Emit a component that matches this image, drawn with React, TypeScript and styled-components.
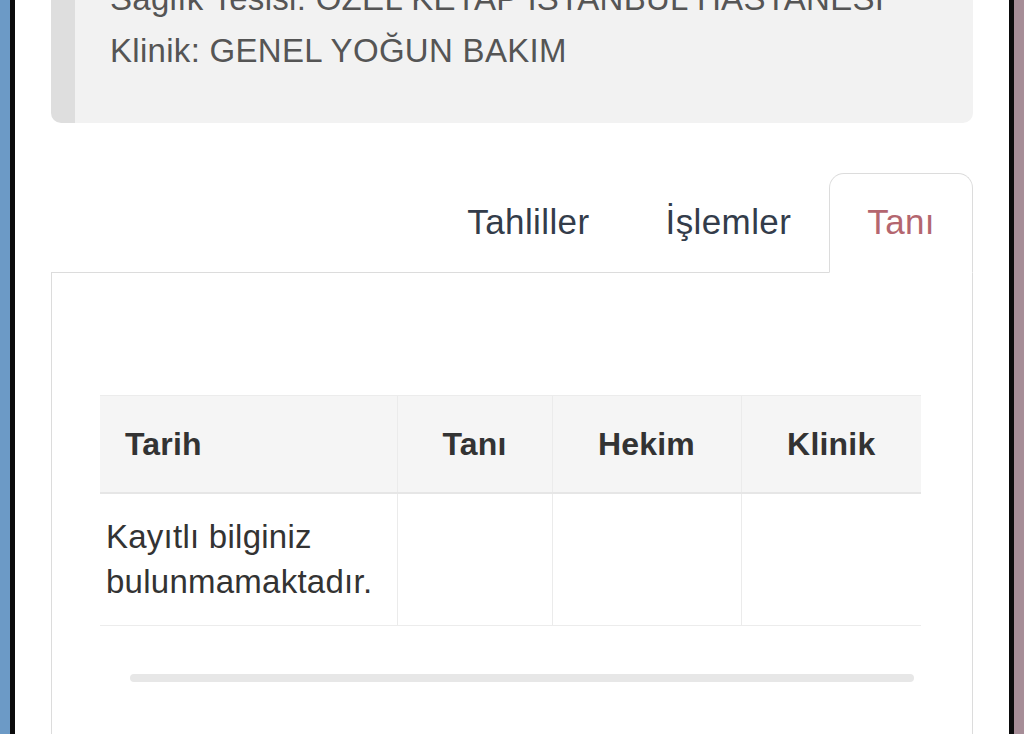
import React from "react"
import styled, { createGlobalStyle } from "styled-components"

const GlobalStyle = createGlobalStyle`
	html, body {
		margin: 0;
		padding: 0;
		height: 100%;
		overflow: hidden;
	}

	body {
		font-family: "Liberation Sans", Arial, Helvetica, sans-serif;
		color: #333;
	}
`

const Shell = styled.div`
	min-height: 100vh;
	padding: 0 10px;
	display: flex;
	background: linear-gradient(to right, #6c9ac6 50%, #a68d97 50%);
`

const Screen = styled.main`
	flex: 1;
	min-height: 100vh;
	background: #fff;
	border-left: 5px solid #0b0b0c;
	border-right: 5px solid #0b0b0c;
	padding: 0 36px 0 36px;
	overflow: hidden;
`

// the page is scrolled: the first line of the box sits above the top edge
const InfoBox = styled.blockquote`
	margin: -57px 0 0;
	padding: 30px 30px 46px 35px;
	background: #f2f2f2;
	border-left: 24px solid #dedede;
	border-radius: 10px;
	font-size: 33px;
	letter-spacing: 0.3px;
	line-height: 52px;
	color: #555;
`

const InfoLine = styled.p`
	margin: 0;
	white-space: nowrap;
`

const TabBar = styled.ul`
	list-style: none;
	margin: 50px 0 0;
	padding: 0;
	display: flex;
	justify-content: flex-end;
	border-bottom: 1px solid #dcdcdc;
`

const Tab = styled.li<{ $active?: boolean }>`
	margin-bottom: -1px;
	padding: 0 37px 3px;
	line-height: 95px;
	font-size: 35px;
	letter-spacing: 0.4px;
	border: 1px solid ${({ $active }) => ($active ? "#dcdcdc" : "transparent")};
	border-bottom-color: ${({ $active }) => ($active ? "#fff" : "transparent")};
	border-radius: 15px 15px 0 0;
	background: ${({ $active }) => ($active ? "#fff" : "transparent")};
	color: ${({ $active }) => ($active ? "#b4666f" : "#333c4a")};
	cursor: pointer;
`

const Panel = styled.section`
	border: 1px solid #dcdcdc;
	border-top: none;
	padding: 122px 50px 120px 48px;
`

const Table = styled.table`
	width: 821px;
	border-collapse: collapse;
	table-layout: fixed;
`

const HeadCell = styled.th<{ $align?: "left" | "center" }>`
	height: 96px;
	padding: ${({ $align }) => ($align === "left" ? "0 0 0 25px" : "0")};
	text-align: ${({ $align }) => $align || "center"};
	vertical-align: middle;
	font-size: 32px;
	letter-spacing: 0.2px;
	font-weight: 700;
	color: #333;
	background: #f5f5f5;
	border-top: 1px solid #ececec;
	border-bottom: 2px solid #e6e6e6;

	& + & {
		border-left: 1px solid #ebebeb;
	}
`

const BodyCell = styled.td`
	padding: 20px 6px 21px;
	vertical-align: top;
	font-size: 33px;
	letter-spacing: 0.25px;
	line-height: 45px;
	color: #333;
	border-bottom: 1px solid #ececec;

	& + & {
		border-left: 1px solid #ebebeb;
	}
`

const ScrollTrack = styled.div`
	height: 8px;
	margin: 48px 8px 0 30px;
	border-radius: 4px;
	background: #e7e7e7;
`

const columns = [
	{ label: "Tarih", width: 297, align: "left" as const },
	{ label: "Tanı", width: 155 },
	{ label: "Hekim", width: 189 },
	{ label: "Klinik", width: 180 },
]

const tabs = ["Tahliller", "İşlemler", "Tanı"]

const App: React.FC = () => {
	return (
		<>
			<GlobalStyle />
			<Shell>
				<Screen>
					<InfoBox>
						<InfoLine>Sağlık Tesisi: ÖZEL KETAP İSTANBUL HASTANESİ</InfoLine>
						<InfoLine>Klinik: GENEL YOĞUN BAKIM</InfoLine>
					</InfoBox>

					<TabBar>
						{ tabs.map( ( tab ) => (
							<Tab key={ tab } $active={ tab === "Tanı" }>{ tab }</Tab>
						)) }
					</TabBar>

					<Panel>
						<Table>
							<colgroup>
								{ columns.map( ( col ) => (
									<col key={ col.label } style={{ width: col.width }} />
								)) }
							</colgroup>
							<thead>
								<tr>
									{ columns.map( ( col ) => (
										<HeadCell key={ col.label } $align={ col.align }>{ col.label }</HeadCell>
									)) }
								</tr>
							</thead>
							<tbody>
								<tr>
									<BodyCell>Kayıtlı bilginiz bulunmamaktadır.</BodyCell>
									<BodyCell />
									<BodyCell />
									<BodyCell />
								</tr>
							</tbody>
						</Table>
						<ScrollTrack />
					</Panel>
				</Screen>
			</Shell>
		</>
	)
}

export default App
